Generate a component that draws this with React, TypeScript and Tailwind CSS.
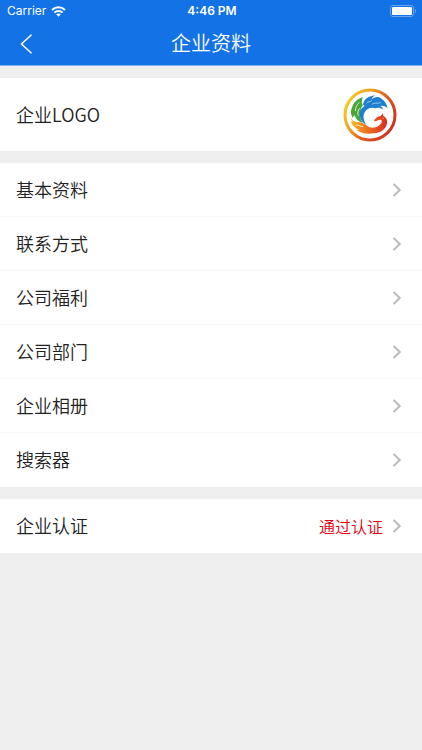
import type { ReactNode } from 'react';

const menuItems = ['基本资料', '联系方式', '公司福利', '公司部门', '企业相册', '搜索器'];

function Chevron() {
  return (
    <svg className="w-3 h-4 shrink-0" viewBox="0 0 12 16" fill="none" stroke="#bbbbc0" strokeWidth="2" aria-hidden="true">
      <path d="M2.5 2 L8.8 8 L2.5 14" />
    </svg>
  );
}

function StatusBar() {
  return (
    <div className="h-[22px] grid grid-cols-3 items-center pl-[7px] pr-[5px] text-xs">
      <div className="flex items-center gap-[5px]">
        <span className="font-normal">Carrier</span>
        <svg className="w-[15px] h-[11px]" viewBox="0 0 45 33" fill="none" stroke="white" strokeWidth="6" aria-hidden="true">
          <path d="M3 12 C14 1 31 1 42 12" />
          <path d="M10 20 C17 13 28 13 35 20" />
          <path d="M22.5 32 L15.5 25 C19.5 21.5 25.5 21.5 29.5 25 Z" fill="white" stroke="none" />
        </svg>
      </div>
      <span className="text-center font-semibold">4:46 PM</span>
      <svg className="w-[27px] h-3 justify-self-end" viewBox="0 0 27 12" aria-hidden="true">
        <rect x="0.5" y="0.5" width="23" height="11" rx="2.5" fill="none" stroke="#6ba5f0" />
        <rect x="2" y="2" width="20" height="8" rx="1" fill="white" />
        <path d="M25 4 C26.6 4.6 26.6 7.4 25 8 Z" fill="#6ba5f0" />
      </svg>
    </div>
  );
}

function CompanyLogo() {
  return (
    <svg className="w-14 h-14" viewBox="20 20 168 168" role="img" aria-label="企业LOGO">
      <defs>
        <linearGradient id="ring" x1="0" y1="0.2" x2="1" y2="0.8">
          <stop offset="0" stopColor="#f3d322" />
          <stop offset="0.3" stopColor="#eda321" />
          <stop offset="0.6" stopColor="#df5a22" />
          <stop offset="1" stopColor="#cf2a20" />
        </linearGradient>
        <linearGradient id="body" x1="0" y1="0" x2="1" y2="0">
          <stop offset="0" stopColor="#f8c020" />
          <stop offset="0.4" stopColor="#f07a22" />
          <stop offset="1" stopColor="#dd2a20" />
        </linearGradient>
      </defs>
      <circle cx="104" cy="104" r="75" fill="white" stroke="url(#ring)" strokeWidth="9" />
      {/* green plume */}
      <path
        d="M82 50 C66 57 55 65 51 79 C46 90 45 99 52 112 L57 104 C61 115 68 123 84 129 C74 116 71 105 77 92 C74 88 78 80 84 74 C78 73 79 64 82 50 Z"
        fill="#47a63c"
      />
      <path d="M72 66 C63 74 61 82 60 92 M73 84 C67 91 66 98 69 106" fill="none" stroke="#e3f1a8" strokeWidth="3" />
      {/* blue plume */}
      <path
        d="M83 73 C86 57 97 48 119 45 C112 50 109 54 109 57 C119 49 131 48 138 55 C147 60 154 70 157 83 C148 76 141 75 135 77 C140 80 143 83 144 87 C134 81 126 81 119 84 C107 80 95 84 88 96 C82 107 84 120 93 134 C78 125 70 109 74 93 C77 85 83 79 88 76 Z"
        fill="#1d7fcd"
      />
      <path d="M110 72 C118 65 127 71 136 67 M93 69 C98 63 104 65 109 61" fill="none" stroke="#d3ebfa" strokeWidth="2" />
      {/* tail, body and head */}
      <path
        d="M43 108 C49 120 57 125 70 126 C82 127 90 132 99 139 C114 146 130 140 138 128 C142 119 137 116 130 119 C126 121 121 123 115 123 C119 113 127 108 136 107 L142 99 L144 107 C152 111 157 119 155 129 C151 148 137 157 116 159 C98 162 79 160 63 149 L74 149 C60 145 50 135 46 122 L54 126 C48 119 45 114 43 108 Z"
        fill="url(#body)"
      />
      <path d="M61 134 C70 132 75 141 84 138" fill="none" stroke="#fff0c0" strokeWidth="3" />
      <circle cx="143" cy="114" r="1.5" fill="white" />
    </svg>
  );
}

function Row({ label, children }: { label: string; children?: ReactNode }) {
  return (
    <button type="button" className="w-full h-[54px] pl-4 pr-[19px] flex items-center justify-between text-left">
      <span className="pb-0.5">{label}</span>
      <span className="flex items-center gap-2">
        {children}
        <Chevron />
      </span>
    </button>
  );
}

export default function App() {
  return (
    <div className="min-h-screen bg-[#efefef] text-[#222222] text-lg font-[350] font-['Noto_Sans_CJK_SC',sans-serif]">
      <header className="bg-[#1372e6] text-white border-b border-[#7fb1f3] font-[Inter,'Noto_Sans_CJK_SC',sans-serif]">
        <StatusBar />
        <div className="h-[43px] grid grid-cols-[56px_1fr_56px] items-center">
          <button type="button" aria-label="返回" className="h-full pl-5 flex items-center">
            <svg className="w-3 h-5" viewBox="0 0 12 20" fill="none" stroke="white" strokeWidth="1.5" aria-hidden="true">
              <path d="M11.5 0.8 L1.5 10 L11.5 19.2" />
            </svg>
          </button>
          <h1 className="text-xl text-center font-[350]">企业资料</h1>
        </div>
      </header>

      <main className="pt-3 flex flex-col gap-3">
        <section className="bg-white">
          <button type="button" className="w-full h-[73px] pl-4 pr-6 flex items-center justify-between">
            <span className="pb-0.5">企业LOGO</span>
            <CompanyLogo />
          </button>
        </section>

        <nav className="bg-white divide-y divide-[#f8f8f8]">
          {menuItems.map((item) => (
            <Row key={item} label={item} />
          ))}
        </nav>

        <section className="bg-white">
          <Row label="企业认证">
            <span className="text-base text-[#e50012]">通过认证</span>
          </Row>
        </section>
      </main>
    </div>
  );
}
